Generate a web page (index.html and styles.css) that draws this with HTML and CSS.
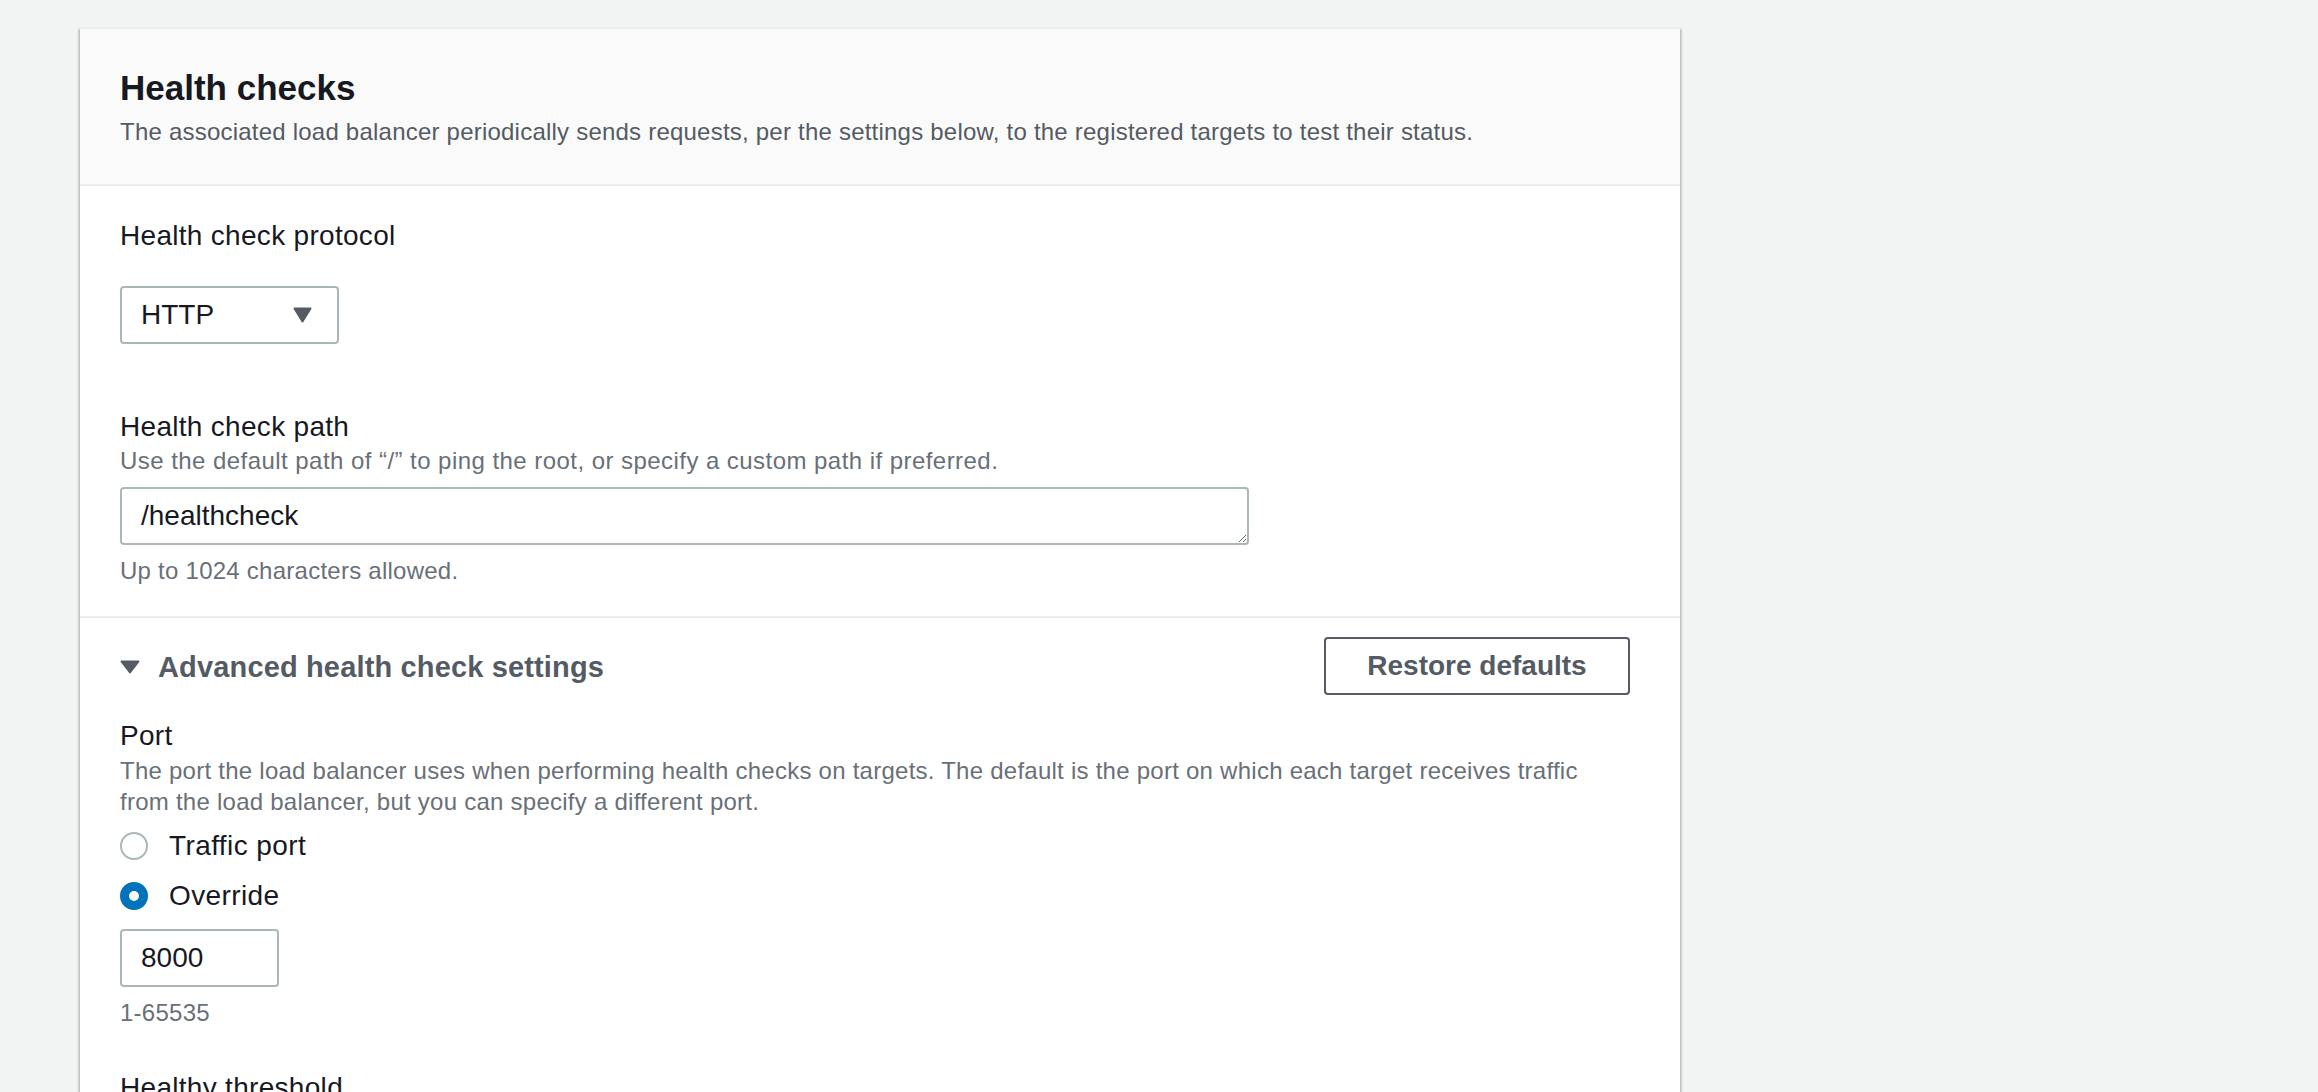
FILE: index.html
```html
<!DOCTYPE html>
<html lang="en">
<head>
<meta charset="utf-8">
<title>Health checks</title>
<link rel="stylesheet" href="styles.css">
</head>
<body>
<main class="page">
  <section class="card">
    <header class="card-header">
      <h2 class="card-title">Health checks</h2>
      <p class="card-desc">The associated load balancer periodically sends requests, per the settings below, to the registered targets to test their status.</p>
    </header>

    <div class="card-body">
      <div class="field">
        <label class="field-label">Health check protocol</label>
        <div class="select select-protocol">
          <span class="select-value">HTTP</span>
          <svg class="select-caret" width="19" height="16" viewBox="0 0 19 16" aria-hidden="true"><path d="M1.5 1.5 H17.5 L9.5 14.5 Z"/></svg>
        </div>
      </div>

      <div class="field field-path">
        <label class="field-label" for="hc-path">Health check path</label>
        <p class="field-desc">Use the default path of “/” to ping the root, or specify a custom path if preferred.</p>
        <textarea id="hc-path" class="textarea" rows="1">/healthcheck</textarea>
        <p class="field-hint">Up to 1024 characters allowed.</p>
      </div>
    </div>

    <div class="advanced">
      <div class="advanced-head">
        <div class="expander">
          <svg class="expander-caret" width="20" height="14" viewBox="0 0 20 14" aria-hidden="true"><path d="M1.5 1.5 H18.5 L10 12.5 Z"/></svg>
          <span class="expander-title">Advanced health check settings</span>
        </div>
        <button class="btn" type="button">Restore defaults</button>
      </div>

      <div class="field field-port">
        <label class="field-label">Port</label>
        <p class="field-desc port-desc">The port the load balancer uses when performing health checks on targets. The default is the port on which each target receives traffic from the load balancer, but you can specify a different port.</p>
        <div class="radio-group">
          <label class="radio"><input type="radio" name="port" class="radio-input"><span>Traffic port</span></label>
          <label class="radio"><input type="radio" name="port" class="radio-input" checked><span>Override</span></label>
        </div>
        <input class="input input-port" type="text" value="8000">
        <p class="field-hint port-hint">1-65535</p>
      </div>

      <div class="field field-threshold">
        <label class="field-label">Healthy threshold</label>
        <p class="field-desc">The number of consecutive health checks successes required before considering an unhealthy target healthy.</p>
        <input class="input input-port" type="text" value="5">
      </div>
    </div>
  </section>
</main>
</body>
</html>
```

FILE: styles.css
```css
* {
  box-sizing: border-box;
}

html,
body {
  margin: 0;
  height: 100%;
  overflow: hidden;
}

body {
  background: #f2f3f3;
  font-family: "Liberation Sans", Arial, sans-serif;
  color: #16191f;
}

.page {
  padding: 27px 0 0 80px;
}

.card {
  width: 1600px;
  background: #ffffff;
  border-top: 2px solid #eaeded;
  box-shadow: 0 2px 2px 0 rgba(0, 28, 36, 0.3),
              2px 2px 2px 0 rgba(0, 28, 36, 0.15),
              -2px 2px 2px 0 rgba(0, 28, 36, 0.15);
}

.card-header {
  background: #fafafa;
  border-bottom: 2px solid #eaeded;
  padding: 37px 40px 37px;
}

.card-title {
  margin: 0;
  font-size: 35px;
  line-height: 44px;
  font-weight: 700;
  color: #16191f;
}

.card-desc {
  margin: 7px 0 0;
  font-size: 24px;
  line-height: 30px;
  letter-spacing: 0.22px;
  color: #545b64;
}

.card-body {
  padding: 30px 40px 30px;
}

.field {
  display: flex;
  flex-direction: column;
  align-items: flex-start;
}

.field-label {
  display: block;
  font-size: 28px;
  line-height: 40px;
  letter-spacing: 0.3px;
  color: #16191f;
}

.field-path {
  margin-top: 64px;
}

.field-path .field-label,
.field-port .field-label,
.field-threshold .field-label {
  line-height: 38px;
}

.field-desc {
  margin: 0;
  font-size: 24px;
  line-height: 30px;
  letter-spacing: 0.25px;
  color: #687078;
}

.field-path .field-desc {
  letter-spacing: 0.45px;
}

.field-hint {
  margin: 11px 0 0;
  font-size: 24px;
  line-height: 30px;
  letter-spacing: 0.25px;
  color: #687078;
}

.select {
  margin-top: 30px;
  width: 219px;
  height: 58px;
  border: 2px solid #aab7b8;
  border-radius: 4px;
  background: #ffffff;
  display: flex;
  align-items: center;
  justify-content: space-between;
  padding: 0 25px 0 19px;
}

.select-value {
  font-size: 28px;
  line-height: 34px;
  color: #16191f;
}

.select-caret path,
.expander-caret path {
  fill: #545b64;
  stroke: #545b64;
  stroke-width: 2;
  stroke-linejoin: round;
}

.textarea {
  display: block;
  margin-top: 11px;
  width: 1129px;
  height: 58px;
  border: 2px solid #aab7b8;
  border-radius: 4px;
  padding: 10px 19px;
  font-family: "Liberation Sans", Arial, sans-serif;
  font-size: 28px;
  line-height: 34px;
  color: #16191f;
  background: #ffffff;
  overflow: hidden;
  resize: vertical;
  outline: none;
}

.advanced {
  border-top: 2px solid #eaeded;
  padding: 19px 40px 0;
}

.advanced-head {
  display: flex;
  align-items: center;
  justify-content: space-between;
}

.expander {
  display: flex;
  align-items: center;
  gap: 18px;
  padding-top: 2px;
}

.expander-title {
  font-size: 29px;
  line-height: 40px;
  font-weight: 700;
  letter-spacing: 0.15px;
  color: #545b64;
}

.btn {
  margin-right: 10px;
  width: 306px;
  height: 58px;
  border: 2px solid #545b64;
  border-radius: 4px;
  background: #ffffff;
  font-family: "Liberation Sans", Arial, sans-serif;
  font-size: 28px;
  font-weight: 700;
  color: #545b64;
  padding: 0;
}

.field-port {
  margin-top: 22px;
}

.port-desc {
  line-height: 31px;
  max-width: 1460px;
}

.radio-group {
  margin-top: 12px;
  display: flex;
  flex-direction: column;
  gap: 16px;
}

.radio {
  display: flex;
  align-items: center;
  gap: 21px;
  height: 34px;
  font-size: 28px;
  line-height: 34px;
  letter-spacing: 0.4px;
  color: #16191f;
}

.radio-input {
  appearance: none;
  -webkit-appearance: none;
  margin: 0;
  width: 28px;
  height: 28px;
  border-radius: 50%;
  border: 2px solid #aab7b8;
  background: #ffffff;
}

.radio-input:checked {
  border: 9px solid #0073bb;
}

.input {
  display: block;
  height: 58px;
  border: 2px solid #aab7b8;
  border-radius: 4px;
  padding: 0 19px;
  font-family: "Liberation Sans", Arial, sans-serif;
  font-size: 28px;
  color: #16191f;
  background: #ffffff;
  outline: none;
}

.input-port {
  margin-top: 16px;
  width: 159px;
}

.port-hint {
  margin-top: 11px;
}

.field-threshold {
  margin-top: 41px;
  padding-bottom: 60px;
}
```
